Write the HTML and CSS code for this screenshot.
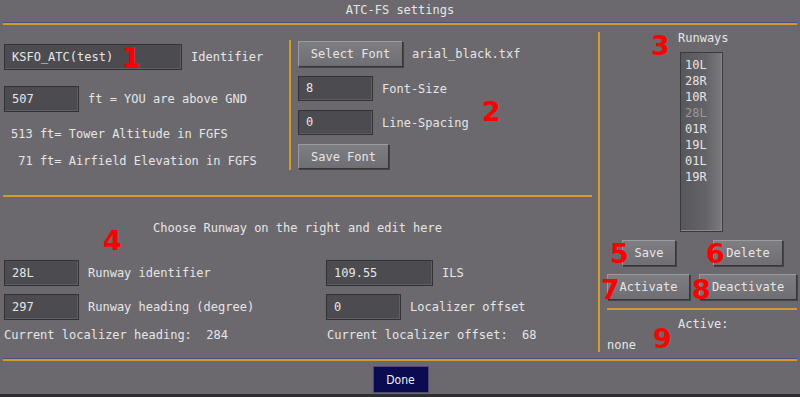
FILE: index.html
```html
<!DOCTYPE html>
<html lang="en">
<head>
  <meta charset="UTF-8" />
  <title>ATC-FS settings</title>
  <link rel="stylesheet" href="styles.css">
</head>
<body>
  <div class="dialog">
    <div class="title">ATC-FS settings</div>
    <div class="rule"></div>

    <div class="main">
      <div class="left">
        <div class="general">
          <div class="tower">
            <div class="field">
              <div class="input wide">KSFO_ATC(test)</div>
              <span>Identifier</span>
            </div>
            <div class="field">
              <div class="input">507</div>
              <span>ft = YOU are above GND</span>
            </div>
            <p class="info">513 ft= Tower Altitude in FGFS</p>
            <p class="info next"> 71 ft= Airfield Elevation in FGFS</p>
          </div>

          <div class="vrule short"></div>

          <div class="font-box">
            <div class="field">
              <button class="btn select-font">Select Font</button>
              <span>arial_black.txf</span>
            </div>
            <div class="field">
              <div class="input small">8</div>
              <span>Font-Size</span>
            </div>
            <div class="field">
              <div class="input small">0</div>
              <span>Line-Spacing</span>
            </div>
            <div class="field">
              <button class="btn save-font">Save Font</button>
            </div>
          </div>
        </div>

        <div class="line left-line"></div>

        <div class="runway">
          <p class="choose">Choose Runway on the right and edit here</p>
          <div class="runway-grid">
            <div class="field">
              <div class="input">28L</div>
              <span>Runway identifier</span>
            </div>
            <div class="field">
              <div class="input ils">109.55</div>
              <span>ILS</span>
            </div>
            <div class="field">
              <div class="input">297</div>
              <span>Runway heading (degree)</span>
            </div>
            <div class="field">
              <div class="input">0</div>
              <span>Localizer offset</span>
            </div>
          </div>
          <div class="current">
            <span>Current localizer heading:  284</span>
            <span class="offset">Current localizer offset:  68</span>
          </div>
        </div>
      </div>

      <div class="vrule tall"></div>

      <div class="right">
        <p class="runways-title">Runways</p>
        <ul class="listbox">
          <li>10L</li>
          <li>28R</li>
          <li>10R</li>
          <li class="dim">28L</li>
          <li>01R</li>
          <li>19L</li>
          <li>01L</li>
          <li>19R</li>
        </ul>
        <div class="btn-row">
          <button class="btn save">Save</button>
          <button class="btn delete">Delete</button>
        </div>
        <div class="btn-row">
          <button class="btn activate">Activate</button>
          <button class="btn deactivate">Deactivate</button>
        </div>
        <div class="line right-line"></div>
        <p class="active-title">Active:</p>
        <p class="active-value">none</p>
      </div>
    </div>

    <div class="rule"></div>
    <div class="footer">
      <button class="done">Done</button>
    </div>
    <div class="bottom-strip"></div>

    <!-- red numbered annotations -->
    <span class="mark m1">1</span>
    <span class="mark m2">2</span>
    <span class="mark m3">3</span>
    <span class="mark m4">4</span>
    <span class="mark m5">5</span>
    <span class="mark m6">6</span>
    <span class="mark m7">7</span>
    <span class="mark m8">8</span>
    <span class="mark m9">9</span>
  </div>
</body>
</html>
```

FILE: styles.css
```css
* { box-sizing: border-box; margin: 0; padding: 0; }

body {
  font-family: 'DejaVu Sans Mono', monospace;
  font-size: 12px;
  background: #6b696e;
  color: #e6e6e6;
}

.dialog {
  position: relative;
  width: 800px;
  height: 397px;
  background: #6b696e;
  overflow: hidden;
}

.title {
  height: 22px;
  line-height: 20px;
  text-align: center;
}

.rule {
  margin: 0 3px;
  height: 3px;
  border-top: 1px solid #4b4d88;
  background: #d29c2a;
}

.line {
  height: 2px;
  background: #d29c2a;
}

.main {
  display: flex;
  height: 333px;
}

.left {
  width: 598px;
}

.general {
  display: flex;
  height: 170px;
}

.tower {
  width: 285px;
  padding: 19px 0 0 4px;
}

.field {
  display: flex;
  align-items: center;
  gap: 9px;
  white-space: pre;
}

.tower .field + .field {
  margin-top: 16px;
}

.input {
  width: 75px;
  height: 26px;
  line-height: 24px;
  padding-left: 7px;
  background: #4c4b4f;
  border: 1px solid #323134;
  box-shadow: inset -1px -1px 0 #5e5d61;
  white-space: pre;
}

.input.wide { width: 178px; }
.input.ils { width: 107px; }
.input.small { height: 25px; line-height: 23px; }

.info {
  margin: 14px 0 0 7px;
  line-height: 16px;
  white-space: pre;
}

.info.next {
  margin-top: 11px;
}

.vrule {
  width: 2px;
  background: #d29c2a;
}

.vrule.short {
  margin: 15px 0 0 4px;
  height: 130px;
}

.vrule.tall {
  margin-top: 7px;
  height: 320px;
}

.font-box {
  padding: 16px 0 0 7px;
}

.font-box .field + .field {
  margin-top: 9px;
}

.btn {
  font-family: 'DejaVu Sans Mono', monospace;
  font-size: 12px;
  color: #e6e6e6;
  height: 26px;
  background: linear-gradient(#7e7d81, #6f6e72);
  border: 1px solid;
  border-color: #9b9a9e #363538 #363538 #9b9a9e;
  box-shadow: 1px 1px 0 #454447;
  cursor: pointer;
}

.select-font { width: 105px; }
.save-font { width: 91px; height: 25px; }

.left-line {
  margin: 0 6px 0 3px;
}

.choose {
  margin-top: 23px;
  padding-left: 153px;
  line-height: 16px;
}

.runway-grid {
  display: grid;
  grid-template-columns: 322px auto;
  row-gap: 8px;
  margin-top: 24px;
  padding-left: 4px;
}

.current {
  display: grid;
  grid-template-columns: 323px auto;
  margin-top: 7px;
  padding-left: 4px;
  line-height: 16px;
  white-space: pre;
}

.right {
  width: 200px;
}

.runways-title {
  margin-top: 5px;
  padding-left: 78px;
  line-height: 16px;
}

.listbox {
  list-style: none;
  margin: 6px 0 0 80px;
  width: 43px;
  height: 180px;
  padding: 4px 0 0 4px;
  line-height: 16px;
  background: linear-gradient(to right, #58575b, #646367 60%, #7a797d);
  border: 1px solid #3a393c;
  box-shadow: inset -1px -1px 0 #88878b;
}

.listbox .dim {
  color: #9a999d;
}

.btn-row {
  display: flex;
  margin-top: 8px;
}

.save { width: 54px; margin-left: 22px; }
.delete { width: 70px; margin-left: 37px; }
.activate { width: 83px; margin-left: 7px; }
.deactivate { width: 98px; margin-left: 9px; }

.right-line {
  margin: 8px 3px 0 7px;
}

.active-title {
  margin-top: 6px;
  padding-left: 78px;
  line-height: 16px;
}

.active-value {
  margin-top: 5px;
  padding-left: 7px;
  line-height: 16px;
}

.footer {
  height: 33px;
  padding-top: 5px;
  text-align: center;
}

.done {
  width: 56px;
  height: 27px;
  margin-left: 1px;
  background: #0b0b52;
  border: 1px solid #4c4b70;
  color: #f0f0f0;
  font-family: 'DejaVu Sans', sans-serif;
  font-stretch: condensed;
  font-size: 12px;
  cursor: pointer;
}

.bottom-strip {
  height: 3px;
  background: #2e2d30;
}

.mark {
  position: absolute;
  font-family: 'DejaVu Sans', sans-serif;
  font-weight: bold;
  font-size: 27px;
  line-height: 27px;
  color: #ff0000;
}

.m1 { left: 122px; top: 44px; }
.m2 { left: 482px; top: 98px; }
.m3 { left: 651px; top: 32px; }
.m4 { left: 103px; top: 227px; }
.m5 { left: 610px; top: 240px; }
.m6 { left: 706px; top: 240px; }
.m7 { left: 601px; top: 276px; }
.m8 { left: 692px; top: 276px; }
.m9 { left: 653px; top: 325px; }
```
